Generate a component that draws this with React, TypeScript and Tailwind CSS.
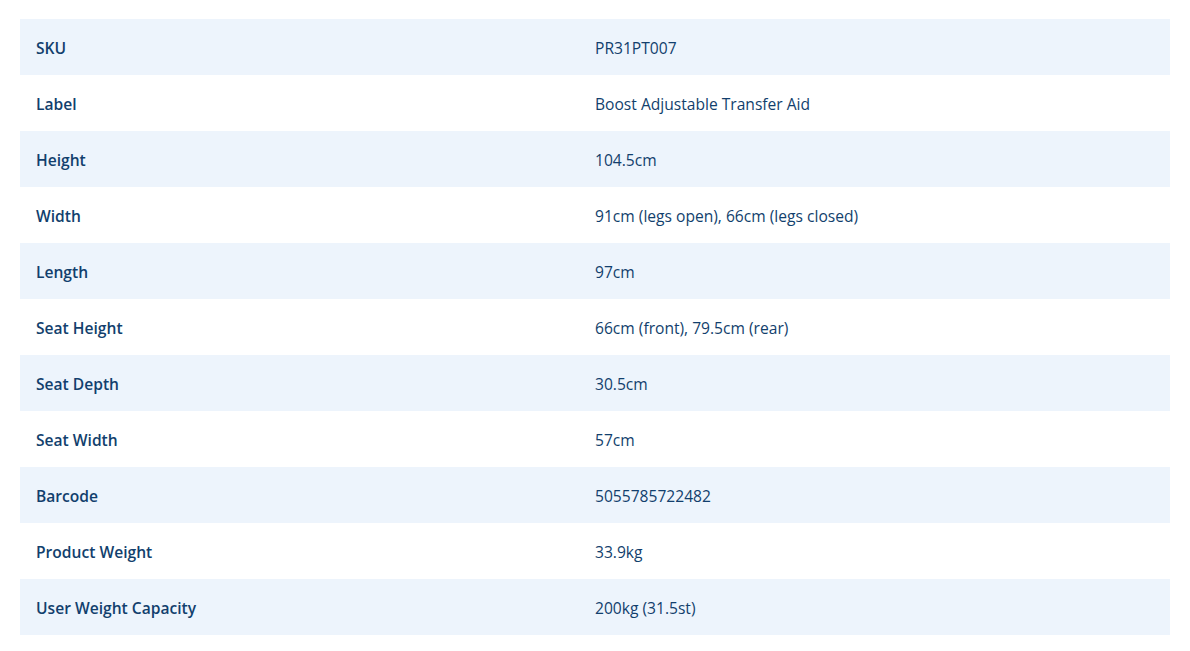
const specs = [
  ["SKU", "PR31PT007"],
  ["Label", "Boost Adjustable Transfer Aid"],
  ["Height", "104.5cm"],
  ["Width", "91cm (legs open), 66cm (legs closed)"],
  ["Length", "97cm"],
  ["Seat Height", "66cm (front), 79.5cm (rear)"],
  ["Seat Depth", "30.5cm"],
  ["Seat Width", "57cm"],
  ["Barcode", "5055785722482"],
  ["Product Weight", "33.9kg"],
  ["User Weight Capacity", "200kg (31.5st)"],
];

export default function App() {
  return (
    <div className="bg-white min-h-screen px-5 pt-[19px] font-['Open_Sans',sans-serif] text-[15.6px] text-[#123f6d]">
      <table className="w-full border-collapse table-fixed">
        <tbody>
          {specs.map(([label, value], i) => (
            <tr key={label} className={i % 2 === 0 ? "bg-[#edf4fc]" : "bg-white"}>
              <td className="w-1/2 h-14 px-4 pt-[3px] pb-0 font-semibold align-middle">{label}</td>
              <td className="w-1/2 h-14 pl-0 pr-4 pt-[3px] pb-0 align-middle">{value}</td>
            </tr>
          ))}
        </tbody>
      </table>
    </div>
  );
}
